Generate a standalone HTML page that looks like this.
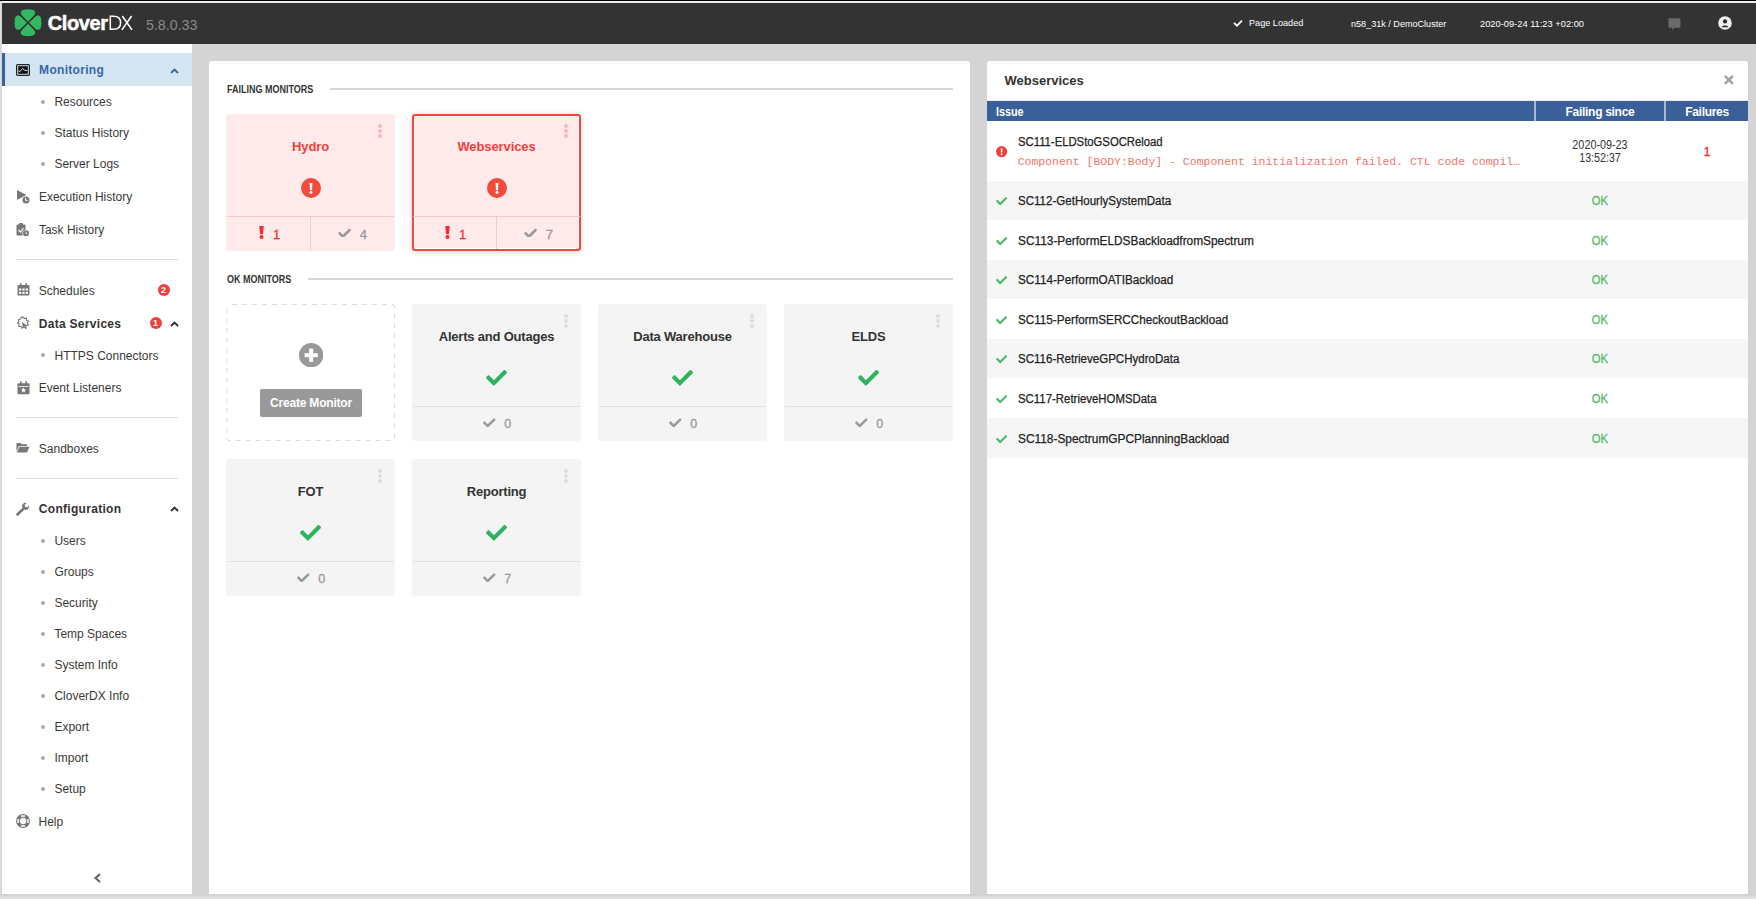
<!DOCTYPE html><html><head><meta charset="utf-8"><style>
html,body{margin:0;padding:0;}
body{width:1756px;height:899px;position:relative;overflow:hidden;background:#d4d4d4;font-family:"Liberation Sans", sans-serif;}
.r{position:absolute;}
.t{position:absolute;white-space:nowrap;line-height:1;}
</style></head><body>
<div class="r" style="left:0px;top:0px;width:1756px;height:1px;background:#050505;"></div>
<div class="r" style="left:0px;top:1px;width:1756px;height:2px;background:#ededed;"></div>
<div class="r" style="left:0px;top:0px;width:2px;height:899px;background:linear-gradient(90deg,#e4e4e4,#cfcfcf);top:1px;"></div>
<div class="r" style="left:2px;top:3px;width:1754px;height:41px;background:#333333;"></div>
<div class="r" style="left:2px;top:44px;width:190px;height:850px;background:#ffffff;"></div>
<div class="r" style="left:209px;top:61px;width:761px;height:833px;background:#ffffff;border-radius:3px 3px 0 0;"></div>
<div class="r" style="left:987px;top:61px;width:761px;height:833px;background:#ffffff;border-radius:3px 3px 0 0;"></div>
<div class="r" style="left:0px;top:894px;width:1756px;height:5px;background:linear-gradient(180deg,#cdcdcd,#e9e9e9);"></div>
<svg class="r" style="left:14px;top:9px;" width="28" height="28" viewBox="0 0 28 28"><g transform="translate(14,13.7)"><g transform="rotate(0)"><path d="M0 -0.5 L-5.6 -6.6 C-8 -9.2 -7.6 -12.4 -4.4 -13 Q0 -13.9 4.4 -13 C7.6 -12.4 8 -9.2 5.6 -6.6 Z" fill="#33b864"/></g><g transform="rotate(90)"><path d="M0 -0.5 L-5.6 -6.6 C-8 -9.2 -7.6 -12.4 -4.4 -13 Q0 -13.9 4.4 -13 C7.6 -12.4 8 -9.2 5.6 -6.6 Z" fill="#33b864"/></g><g transform="rotate(180)"><path d="M0 -0.5 L-5.6 -6.6 C-8 -9.2 -7.6 -12.4 -4.4 -13 Q0 -13.9 4.4 -13 C7.6 -12.4 8 -9.2 5.6 -6.6 Z" fill="#33b864"/></g><g transform="rotate(270)"><path d="M0 -0.5 L-5.6 -6.6 C-8 -9.2 -7.6 -12.4 -4.4 -13 Q0 -13.9 4.4 -13 C7.6 -12.4 8 -9.2 5.6 -6.6 Z" fill="#33b864"/></g><path d="M-15 -15 L15 15 M15 -15 L-15 15" stroke="#333" stroke-width="1.5"/></g></svg>
<div class="t" style="left:47.7px;top:12.97px;font-size:20px;font-weight:bold;color:#ffffff;letter-spacing:-0.4px;-webkit-text-stroke:0.5px #fff;">Clover</div>
<svg class="r" style="left:100px;top:10px;" width="40" height="24" viewBox="100 10 40 24"><path d="M110.3 16.2 V29.3 H113.6 C118.6 29.3 120.6 26.2 120.6 22.75 C120.6 19.3 118.6 16.2 113.6 16.2 Z" fill="none" stroke="#fff" stroke-width="1.5"/><path d="M122.3 16 L132 29.9 M131.6 16 L121.9 29.9" stroke="#fff" stroke-width="1.6"/></svg>
<div class="t" style="left:145.5px;top:17.20px;font-size:15px;font-weight:normal;color:#8a8a8a;transform:scaleX(0.948);transform-origin:left top;">5.8.0.33</div>
<svg class="r" style="left:1233px;top:19px;overflow:visible;" width="10" height="9" viewBox="0 0 512 512"><path fill="#fff" d="M173.9 439.4l-166.4-166.4c-10-10-10-26.2 0-36.2l36.2-36.2c10-10 26.2-10 36.2 0L192 312.7 432.1 72.6c10-10 26.2-10 36.2 0l36.2 36.2c10 10 10 26.2 0 36.2l-294.4 294.4c-10 10-26.2 10-36.2 0z"/></svg>
<div class="t" style="left:1249px;top:17.87px;font-size:9.6px;font-weight:normal;color:#ffffff;transform:scaleX(0.952);transform-origin:left top;">Page Loaded</div>
<div class="t" style="left:1350.7px;top:18.67px;font-size:9.6px;font-weight:normal;color:#ffffff;transform:scaleX(0.945);transform-origin:left top;">n58_31k / DemoCluster</div>
<div class="t" style="left:1479.6px;top:18.70px;font-size:9.8px;font-weight:normal;color:#ffffff;transform:scaleX(0.949);transform-origin:left top;">2020-09-24 11:23 +02:00</div>
<svg class="r" style="left:1668px;top:18px;" width="13" height="13" viewBox="0 0 13 13"><path fill="#6a6a6a" d="M1.4 0.2 H11.4 Q12.4 0.2 12.4 1.2 V8.8 Q12.4 9.8 11.4 9.8 H6.6 L4.2 12.2 V9.8 H1.4 Q0.4 9.8 0.4 8.8 V1.2 Q0.4 0.2 1.4 0.2 Z"/></svg>
<svg class="r" style="left:1717.8px;top:15.9px;" width="14" height="14" viewBox="0 0 14 14"><circle cx="7" cy="7" r="6.8" fill="#eeeeee"/><circle cx="7" cy="5.4" r="2.1" fill="#2a2a2a"/><path d="M3.7 11.2 C4 8.8 10 8.8 10.3 11.2 Z" fill="#2a2a2a"/></svg>
<div class="r" style="left:2px;top:53px;width:190px;height:33px;background:#d3e5f0;"></div>
<div class="r" style="left:2px;top:53px;width:3px;height:33px;background:#3a62a3;"></div>
<svg class="r" style="left:16px;top:64px;" width="14" height="12" viewBox="0 0 14 12"><rect x="0.6" y="0.6" width="12.8" height="10.8" fill="none" stroke="#222" stroke-width="1.2" rx="1"/><rect x="2.2" y="2.2" width="9.6" height="7.6" fill="#111"/><path d="M2.3 7 L4.2 7.5 L6.6 4.3 L8.2 6.2 L11.4 6.6" stroke="#c8d2da" stroke-width="1" fill="none"/></svg>
<div class="t" style="left:39.1px;top:63.84px;font-size:12px;font-weight:bold;color:#3a66a8;letter-spacing:0.3px;">Monitoring</div>
<svg class="r" style="left:169.7px;top:67.5px;" width="9" height="6" viewBox="0 0 9 6"><path d="M1 5 L4.5 1.5 L8 5" fill="none" stroke="#3a66a8" stroke-width="1.9"/></svg>
<div class="r" style="left:41px;top:99.5px;width:4px;height:4px;background:#aaaaaa;border-radius:50%;"></div>
<div class="t" style="left:54.4px;top:95.84px;font-size:12px;font-weight:normal;color:#3a3a3a;">Resources</div>
<div class="r" style="left:41px;top:130.5px;width:4px;height:4px;background:#aaaaaa;border-radius:50%;"></div>
<div class="t" style="left:54.4px;top:126.84px;font-size:12px;font-weight:normal;color:#3a3a3a;">Status History</div>
<div class="r" style="left:41px;top:161.5px;width:4px;height:4px;background:#aaaaaa;border-radius:50%;"></div>
<div class="t" style="left:54.4px;top:157.84px;font-size:12px;font-weight:normal;color:#3a3a3a;">Server Logs</div>
<div class="t" style="left:38.9px;top:191.04px;font-size:12px;font-weight:normal;color:#3a3a3a;">Execution History</div>
<div class="t" style="left:38.9px;top:224.34px;font-size:12px;font-weight:normal;color:#3a3a3a;">Task History</div>
<div class="r" style="left:16px;top:259px;width:162px;height:1px;background:#dddddd;"></div>
<div class="t" style="left:38.7px;top:284.54px;font-size:12px;font-weight:normal;color:#3a3a3a;">Schedules</div>
<div class="t" style="left:38.7px;top:317.84px;font-size:12px;font-weight:bold;color:#333;letter-spacing:0.3px;">Data Services</div>
<div class="t" style="left:54.5px;top:349.54px;font-size:12px;font-weight:normal;color:#3a3a3a;">HTTPS Connectors</div>
<div class="r" style="left:41px;top:353.2px;width:4px;height:4px;background:#aaaaaa;border-radius:50%;"></div>
<div class="t" style="left:38.7px;top:382.34px;font-size:12px;font-weight:normal;color:#3a3a3a;">Event Listeners</div>
<div class="r" style="left:16px;top:417px;width:162px;height:1px;background:#dddddd;"></div>
<div class="t" style="left:38.8px;top:442.84px;font-size:12px;font-weight:normal;color:#3a3a3a;">Sandboxes</div>
<div class="r" style="left:16px;top:478px;width:162px;height:1px;background:#dddddd;"></div>
<div class="t" style="left:38.8px;top:502.84px;font-size:12px;font-weight:bold;color:#333;letter-spacing:0.3px;">Configuration</div>
<svg class="r" style="left:169.5px;top:506px;" width="9" height="6" viewBox="0 0 9 6"><path d="M1 5 L4.5 1.5 L8 5" fill="none" stroke="#333" stroke-width="1.9"/></svg>
<svg class="r" style="left:169.5px;top:321px;" width="9" height="6" viewBox="0 0 9 6"><path d="M1 5 L4.5 1.5 L8 5" fill="none" stroke="#333" stroke-width="1.9"/></svg>
<div class="r" style="left:41px;top:538.5px;width:4px;height:4px;background:#aaaaaa;border-radius:50%;"></div>
<div class="t" style="left:54.4px;top:534.84px;font-size:12px;font-weight:normal;color:#3a3a3a;">Users</div>
<div class="r" style="left:41px;top:569.5px;width:4px;height:4px;background:#aaaaaa;border-radius:50%;"></div>
<div class="t" style="left:54.4px;top:565.84px;font-size:12px;font-weight:normal;color:#3a3a3a;">Groups</div>
<div class="r" style="left:41px;top:600.5px;width:4px;height:4px;background:#aaaaaa;border-radius:50%;"></div>
<div class="t" style="left:54.4px;top:596.84px;font-size:12px;font-weight:normal;color:#3a3a3a;">Security</div>
<div class="r" style="left:41px;top:631.5px;width:4px;height:4px;background:#aaaaaa;border-radius:50%;"></div>
<div class="t" style="left:54.4px;top:627.84px;font-size:12px;font-weight:normal;color:#3a3a3a;">Temp Spaces</div>
<div class="r" style="left:41px;top:662.5px;width:4px;height:4px;background:#aaaaaa;border-radius:50%;"></div>
<div class="t" style="left:54.4px;top:658.84px;font-size:12px;font-weight:normal;color:#3a3a3a;">System Info</div>
<div class="r" style="left:41px;top:693.5px;width:4px;height:4px;background:#aaaaaa;border-radius:50%;"></div>
<div class="t" style="left:54.4px;top:689.84px;font-size:12px;font-weight:normal;color:#3a3a3a;">CloverDX Info</div>
<div class="r" style="left:41px;top:724.5px;width:4px;height:4px;background:#aaaaaa;border-radius:50%;"></div>
<div class="t" style="left:54.4px;top:720.84px;font-size:12px;font-weight:normal;color:#3a3a3a;">Export</div>
<div class="r" style="left:41px;top:755.5px;width:4px;height:4px;background:#aaaaaa;border-radius:50%;"></div>
<div class="t" style="left:54.4px;top:751.84px;font-size:12px;font-weight:normal;color:#3a3a3a;">Import</div>
<div class="r" style="left:41px;top:786.5px;width:4px;height:4px;background:#aaaaaa;border-radius:50%;"></div>
<div class="t" style="left:54.4px;top:782.84px;font-size:12px;font-weight:normal;color:#3a3a3a;">Setup</div>
<div class="t" style="left:38.5px;top:815.54px;font-size:12px;font-weight:normal;color:#3a3a3a;">Help</div>
<div class="r" style="left:157.5px;top:284px;width:12px;height:12px;border-radius:50%;background:#f0403a;color:#fff;font-size:9px;font-weight:bold;line-height:12px;text-align:center;">2</div>
<div class="r" style="left:149.5px;top:317.3px;width:12px;height:12px;border-radius:50%;background:#f0403a;color:#fff;font-size:9px;font-weight:bold;line-height:12px;text-align:center;">1</div>
<svg class="r" style="left:93px;top:873px;" width="9" height="10" viewBox="0 0 9 10"><path d="M7 1 L2.5 5 L7 9" fill="none" stroke="#666" stroke-width="2.2"/></svg>
<svg class="r" style="left:16px;top:189px;" width="14" height="15" viewBox="0 0 14 15"><path d="M1 1 L10.5 6 L1 11 Z" fill="#777"/><circle cx="10" cy="11" r="4.2" fill="#fff"/><circle cx="10" cy="11" r="3.5" fill="#777"/><path d="M9.6 8.8 V11.4 H11.6" stroke="#fff" stroke-width="1" fill="none"/></svg>
<svg class="r" style="left:16px;top:222px;" width="14" height="15" viewBox="0 0 14 15"><rect x="0.5" y="2.5" width="9" height="11" rx="1" fill="#777"/><rect x="3" y="1" width="4" height="2.5" rx="0.8" fill="#777"/><path d="M2.5 8 L4.5 10 L7.5 6" stroke="#fff" stroke-width="1.2" fill="none"/><circle cx="10" cy="11.3" r="3.6" fill="#fff"/><circle cx="10" cy="11.3" r="3" fill="#777"/><path d="M10 9.6 V11.5 H11.2" stroke="#fff" stroke-width="0.8" fill="none"/></svg>
<svg class="r" style="left:16.5px;top:283px;" width="13" height="13" viewBox="0 0 13 13"><rect x="0.5" y="2" width="12" height="10.5" rx="1" fill="#777"/><rect x="3" y="0.3" width="1.6" height="3" fill="#777"/><rect x="8.4" y="0.3" width="1.6" height="3" fill="#777"/><g fill="#fff"><rect x="2" y="5.5" width="2.3" height="2"/><rect x="5.35" y="5.5" width="2.3" height="2"/><rect x="8.7" y="5.5" width="2.3" height="2"/><rect x="2" y="8.8" width="2.3" height="2"/><rect x="5.35" y="8.8" width="2.3" height="2"/><rect x="8.7" y="8.8" width="2.3" height="2"/></g></svg>
<svg class="r" style="left:16px;top:316px;" width="14" height="15" viewBox="0 0 14 15"><path d="M7 1 L8.3 2.6 L10.4 2.2 L10.6 4.3 L12.5 5.3 L11.4 7.1 L12.3 9 L10.2 9.6 L9.7 11.7 L7.7 11 L6 12.3 L4.9 10.5 L2.8 10.4 L3.1 8.3 L1.5 7 L3 5.5 L2.5 3.4 L4.6 3.1 L5.3 1.1 Z" fill="none" stroke="#777" stroke-width="1.1"/><path d="M6 6 L11 9.5 L9.2 10 L10.5 12.8 L9.3 13.3 L8.2 10.6 L6.8 11.8 Z" fill="#777"/></svg>
<svg class="r" style="left:16.5px;top:381px;" width="13" height="14" viewBox="0 0 13 14"><rect x="0.5" y="2.3" width="12" height="11" rx="1" fill="#777"/><rect x="3" y="0.3" width="1.6" height="3" fill="#777"/><rect x="8.4" y="0.3" width="1.6" height="3" fill="#777"/><rect x="1.6" y="5.2" width="9.8" height="0.8" fill="#fff"/><path d="M6.5 6.6 L7.3 8.3 L9.1 8.4 L7.7 9.6 L8.2 11.4 L6.5 10.4 L4.8 11.4 L5.3 9.6 L3.9 8.4 L5.7 8.3 Z" fill="#fff"/></svg>
<svg class="r" style="left:16px;top:442px;" width="14" height="11" viewBox="0 0 14 11"><path d="M0.5 1 H4.5 L5.8 2.3 H11 V4 H3 L0.5 9.5 Z" fill="#777"/><path d="M3.4 4.8 H13.5 L11 10.5 H0.8 Z" fill="#777"/></svg>
<svg class="r" style="left:16px;top:502px;" width="14" height="14" viewBox="0 0 14 14"><path d="M1.5 12.5 L7.2 6.8" stroke="#777" stroke-width="2.6" stroke-linecap="round"/><path d="M6.2 5.2 C5.5 2.6 7.8 0.3 10.6 0.9 L8.6 2.9 L9.2 4.8 L11.1 5.4 L13.1 3.4 C13.7 6.2 11.4 8.5 8.8 7.8 Z" fill="#777"/></svg>
<svg class="r" style="left:16px;top:814px;" width="14" height="14" viewBox="0 0 14 14"><circle cx="7" cy="7" r="5.1" fill="none" stroke="#777" stroke-width="3.7"/><g fill="#fff"><rect x="5" y="1.3" width="4" height="1.5"/><rect x="5" y="11.2" width="4" height="1.5"/><rect x="1.3" y="5" width="1.5" height="4"/><rect x="11.2" y="5" width="1.5" height="4"/></g></svg>
<div class="t" style="left:226.5px;top:84.73px;font-size:10px;font-weight:bold;color:#333;transform:scaleX(0.9);transform-origin:left top;">FAILING MONITORS</div>
<div class="r" style="left:330px;top:88px;width:623px;height:2px;background:#d6d6d6;"></div>
<div class="t" style="left:226.7px;top:275.13px;font-size:10px;font-weight:bold;color:#333;transform:scaleX(0.9);transform-origin:left top;">OK MONITORS</div>
<div class="r" style="left:308px;top:278px;width:645px;height:2px;background:#d6d6d6;"></div>
<div class="r" style="left:226px;top:114px;width:169px;height:137px;background:#feeaea;border-radius:3px;"></div>
<div class="r" style="left:378.3px;top:124.2px;width:4px;height:4px;background:#f7b9b6;border-radius:50%;"></div>
<div class="r" style="left:378.3px;top:129.0px;width:4px;height:4px;background:#f7b9b6;border-radius:50%;"></div>
<div class="r" style="left:378.3px;top:133.8px;width:4px;height:4px;background:#f7b9b6;border-radius:50%;"></div>
<div class="t" style="left:226px;top:140.10px;font-size:13px;font-weight:bold;color:#f0403a;letter-spacing:-0.1px;width:169px;text-align:center;">Hydro</div>
<svg class="r" style="left:300.5px;top:177.8px;" width="20" height="20" viewBox="0 0 20 20"><circle cx="10" cy="10" r="10" fill="#f44a3c"/><path d="M8.6 5 H11.4 L11 12.2 H9 Z" fill="#fff"/><circle cx="10" cy="14.4" r="1.45" fill="#fff"/></svg>
<div class="r" style="left:227px;top:216px;width:167px;height:1px;background:#f6c8c8;"></div>
<div class="r" style="left:310px;top:217px;width:1px;height:34px;background:#f6c8c8;"></div>
<svg class="r" style="left:259.2px;top:225.8px;" width="5" height="13" viewBox="0 0 5 13"><path d="M0.3 0 H4.7 L4 8.3 H1 Z" fill="#f0302c"/><circle cx="2.5" cy="11" r="2" fill="#f0302c"/></svg>
<div class="t" style="left:273px;top:227.70px;font-size:13px;font-weight:normal;color:#f0302c;-webkit-text-stroke:0.3px #f0302c;">1</div>
<svg class="r" style="left:338px;top:227.3px;" width="13" height="10" viewBox="0 0 512 400"><path fill="#999" d="M173.9 439.4l-166.4-166.4c-10-10-10-26.2 0-36.2l36.2-36.2c10-10 26.2-10 36.2 0L192 312.7 432.1 72.6c10-10 26.2-10 36.2 0l36.2 36.2c10 10 10 26.2 0 36.2l-294.4 294.4c-10 10-26.2 10-36.2 0z"/></svg>
<div class="t" style="left:359.8px;top:227.70px;font-size:13px;font-weight:normal;color:#999;-webkit-text-stroke:0.3px #999;">4</div>
<div class="r" style="left:412px;top:114px;width:169px;height:137px;background:#feeaea;border-radius:3px;box-sizing:border-box;border:2px solid #f6463a;box-shadow:inset 0 0 0 1px #fff, 0 1px 6px rgba(0,0,0,0.18);"></div>
<div class="r" style="left:564.3px;top:124.2px;width:4px;height:4px;background:#f7b9b6;border-radius:50%;"></div>
<div class="r" style="left:564.3px;top:129.0px;width:4px;height:4px;background:#f7b9b6;border-radius:50%;"></div>
<div class="r" style="left:564.3px;top:133.8px;width:4px;height:4px;background:#f7b9b6;border-radius:50%;"></div>
<div class="t" style="left:412px;top:140.10px;font-size:13px;font-weight:bold;color:#f0403a;letter-spacing:-0.1px;width:169px;text-align:center;">Webservices</div>
<svg class="r" style="left:486.5px;top:177.8px;" width="20" height="20" viewBox="0 0 20 20"><circle cx="10" cy="10" r="10" fill="#f44a3c"/><path d="M8.6 5 H11.4 L11 12.2 H9 Z" fill="#fff"/><circle cx="10" cy="14.4" r="1.45" fill="#fff"/></svg>
<div class="r" style="left:413px;top:216px;width:167px;height:1px;background:#f6c8c8;"></div>
<div class="r" style="left:496px;top:217px;width:1px;height:32px;background:#f6c8c8;"></div>
<svg class="r" style="left:445.2px;top:225.8px;" width="5" height="13" viewBox="0 0 5 13"><path d="M0.3 0 H4.7 L4 8.3 H1 Z" fill="#f0302c"/><circle cx="2.5" cy="11" r="2" fill="#f0302c"/></svg>
<div class="t" style="left:459px;top:227.70px;font-size:13px;font-weight:normal;color:#f0302c;-webkit-text-stroke:0.3px #f0302c;">1</div>
<svg class="r" style="left:524px;top:227.3px;" width="13" height="10" viewBox="0 0 512 400"><path fill="#999" d="M173.9 439.4l-166.4-166.4c-10-10-10-26.2 0-36.2l36.2-36.2c10-10 26.2-10 36.2 0L192 312.7 432.1 72.6c10-10 26.2-10 36.2 0l36.2 36.2c10 10 10 26.2 0 36.2l-294.4 294.4c-10 10-26.2 10-36.2 0z"/></svg>
<div class="t" style="left:545.8px;top:227.70px;font-size:13px;font-weight:normal;color:#999;-webkit-text-stroke:0.3px #999;">7</div>
<svg class="r" style="left:226px;top:304px;" width="169" height="137" viewBox="0 0 169 137"><rect x="1" y="0.5" width="167.5" height="136" rx="2" fill="none" stroke="#dcdcdc" stroke-width="1" stroke-dasharray="5 5" stroke-dashoffset="-3"/></svg>
<svg class="r" style="left:298.5px;top:342.7px;" width="24.4" height="24.4" viewBox="0 0 24 24"><circle cx="12" cy="12" r="12" fill="#999"/><rect x="5.5" y="10" width="13" height="4" fill="#fff"/><rect x="10" y="5.5" width="4" height="13" fill="#fff"/></svg>
<div class="r" style="left:260px;top:389px;width:102px;height:28px;background:#999;border-radius:2px;color:#fff;font-size:12px;font-weight:bold;line-height:28px;text-align:center;letter-spacing:-0.2px;">Create Monitor</div>
<div class="r" style="left:412px;top:304px;width:169px;height:137px;background:#f4f4f4;border-radius:3px;"></div>
<div class="r" style="left:564.4px;top:314.0px;width:4px;height:4px;background:#dcdcdc;border-radius:50%;"></div>
<div class="r" style="left:564.4px;top:318.8px;width:4px;height:4px;background:#dcdcdc;border-radius:50%;"></div>
<div class="r" style="left:564.4px;top:323.6px;width:4px;height:4px;background:#dcdcdc;border-radius:50%;"></div>
<div class="t" style="left:412px;top:330.30px;font-size:13px;font-weight:bold;color:#333;letter-spacing:-0.2px;width:169px;text-align:center;">Alerts and Outages</div>
<svg class="r" style="left:486px;top:370.2px;" width="21" height="15.6" viewBox="0 0 512 380"><path fill="#2fb35e" d="M173.9 439.4l-166.4-166.4c-10-10-10-26.2 0-36.2l36.2-36.2c10-10 26.2-10 36.2 0L192 312.7 432.1 72.6c10-10 26.2-10 36.2 0l36.2 36.2c10 10 10 26.2 0 36.2l-294.4 294.4c-10 10-26.2 10-36.2 0z" transform="translate(0,-65)"/></svg>
<div class="r" style="left:413px;top:406px;width:167px;height:1px;background:#e2e2e2;"></div>
<svg class="r" style="left:483px;top:417.7px;" width="12.5" height="9.7" viewBox="0 0 512 380"><path fill="#999" d="M173.9 439.4l-166.4-166.4c-10-10-10-26.2 0-36.2l36.2-36.2c10-10 26.2-10 36.2 0L192 312.7 432.1 72.6c10-10 26.2-10 36.2 0l36.2 36.2c10 10 10 26.2 0 36.2l-294.4 294.4c-10 10-26.2 10-36.2 0z" transform="translate(0,-65)"/></svg>
<div class="t" style="left:504.3px;top:417.92px;font-size:12.5px;font-weight:normal;color:#999;-webkit-text-stroke:0.3px #999;">0</div>
<div class="r" style="left:598px;top:304px;width:169px;height:137px;background:#f4f4f4;border-radius:3px;"></div>
<div class="r" style="left:750.4px;top:314.0px;width:4px;height:4px;background:#dcdcdc;border-radius:50%;"></div>
<div class="r" style="left:750.4px;top:318.8px;width:4px;height:4px;background:#dcdcdc;border-radius:50%;"></div>
<div class="r" style="left:750.4px;top:323.6px;width:4px;height:4px;background:#dcdcdc;border-radius:50%;"></div>
<div class="t" style="left:598px;top:330.30px;font-size:13px;font-weight:bold;color:#333;letter-spacing:-0.2px;width:169px;text-align:center;">Data Warehouse</div>
<svg class="r" style="left:672px;top:370.2px;" width="21" height="15.6" viewBox="0 0 512 380"><path fill="#2fb35e" d="M173.9 439.4l-166.4-166.4c-10-10-10-26.2 0-36.2l36.2-36.2c10-10 26.2-10 36.2 0L192 312.7 432.1 72.6c10-10 26.2-10 36.2 0l36.2 36.2c10 10 10 26.2 0 36.2l-294.4 294.4c-10 10-26.2 10-36.2 0z" transform="translate(0,-65)"/></svg>
<div class="r" style="left:599px;top:406px;width:167px;height:1px;background:#e2e2e2;"></div>
<svg class="r" style="left:669px;top:417.7px;" width="12.5" height="9.7" viewBox="0 0 512 380"><path fill="#999" d="M173.9 439.4l-166.4-166.4c-10-10-10-26.2 0-36.2l36.2-36.2c10-10 26.2-10 36.2 0L192 312.7 432.1 72.6c10-10 26.2-10 36.2 0l36.2 36.2c10 10 10 26.2 0 36.2l-294.4 294.4c-10 10-26.2 10-36.2 0z" transform="translate(0,-65)"/></svg>
<div class="t" style="left:690.3px;top:417.92px;font-size:12.5px;font-weight:normal;color:#999;-webkit-text-stroke:0.3px #999;">0</div>
<div class="r" style="left:784px;top:304px;width:169px;height:137px;background:#f4f4f4;border-radius:3px;"></div>
<div class="r" style="left:936.4px;top:314.0px;width:4px;height:4px;background:#dcdcdc;border-radius:50%;"></div>
<div class="r" style="left:936.4px;top:318.8px;width:4px;height:4px;background:#dcdcdc;border-radius:50%;"></div>
<div class="r" style="left:936.4px;top:323.6px;width:4px;height:4px;background:#dcdcdc;border-radius:50%;"></div>
<div class="t" style="left:784px;top:330.30px;font-size:13px;font-weight:bold;color:#333;letter-spacing:-0.2px;width:169px;text-align:center;">ELDS</div>
<svg class="r" style="left:858px;top:370.2px;" width="21" height="15.6" viewBox="0 0 512 380"><path fill="#2fb35e" d="M173.9 439.4l-166.4-166.4c-10-10-10-26.2 0-36.2l36.2-36.2c10-10 26.2-10 36.2 0L192 312.7 432.1 72.6c10-10 26.2-10 36.2 0l36.2 36.2c10 10 10 26.2 0 36.2l-294.4 294.4c-10 10-26.2 10-36.2 0z" transform="translate(0,-65)"/></svg>
<div class="r" style="left:785px;top:406px;width:167px;height:1px;background:#e2e2e2;"></div>
<svg class="r" style="left:855px;top:417.7px;" width="12.5" height="9.7" viewBox="0 0 512 380"><path fill="#999" d="M173.9 439.4l-166.4-166.4c-10-10-10-26.2 0-36.2l36.2-36.2c10-10 26.2-10 36.2 0L192 312.7 432.1 72.6c10-10 26.2-10 36.2 0l36.2 36.2c10 10 10 26.2 0 36.2l-294.4 294.4c-10 10-26.2 10-36.2 0z" transform="translate(0,-65)"/></svg>
<div class="t" style="left:876.3px;top:417.92px;font-size:12.5px;font-weight:normal;color:#999;-webkit-text-stroke:0.3px #999;">0</div>
<div class="r" style="left:226px;top:459px;width:169px;height:137px;background:#f4f4f4;border-radius:3px;"></div>
<div class="r" style="left:378.4px;top:469.0px;width:4px;height:4px;background:#dcdcdc;border-radius:50%;"></div>
<div class="r" style="left:378.4px;top:473.8px;width:4px;height:4px;background:#dcdcdc;border-radius:50%;"></div>
<div class="r" style="left:378.4px;top:478.6px;width:4px;height:4px;background:#dcdcdc;border-radius:50%;"></div>
<div class="t" style="left:226px;top:485.30px;font-size:13px;font-weight:bold;color:#333;letter-spacing:-0.2px;width:169px;text-align:center;">FOT</div>
<svg class="r" style="left:300px;top:525.2px;" width="21" height="15.6" viewBox="0 0 512 380"><path fill="#2fb35e" d="M173.9 439.4l-166.4-166.4c-10-10-10-26.2 0-36.2l36.2-36.2c10-10 26.2-10 36.2 0L192 312.7 432.1 72.6c10-10 26.2-10 36.2 0l36.2 36.2c10 10 10 26.2 0 36.2l-294.4 294.4c-10 10-26.2 10-36.2 0z" transform="translate(0,-65)"/></svg>
<div class="r" style="left:227px;top:561px;width:167px;height:1px;background:#e2e2e2;"></div>
<svg class="r" style="left:297px;top:572.7px;" width="12.5" height="9.7" viewBox="0 0 512 380"><path fill="#999" d="M173.9 439.4l-166.4-166.4c-10-10-10-26.2 0-36.2l36.2-36.2c10-10 26.2-10 36.2 0L192 312.7 432.1 72.6c10-10 26.2-10 36.2 0l36.2 36.2c10 10 10 26.2 0 36.2l-294.4 294.4c-10 10-26.2 10-36.2 0z" transform="translate(0,-65)"/></svg>
<div class="t" style="left:318.3px;top:572.92px;font-size:12.5px;font-weight:normal;color:#999;-webkit-text-stroke:0.3px #999;">0</div>
<div class="r" style="left:412px;top:459px;width:169px;height:137px;background:#f4f4f4;border-radius:3px;"></div>
<div class="r" style="left:564.4px;top:469.0px;width:4px;height:4px;background:#dcdcdc;border-radius:50%;"></div>
<div class="r" style="left:564.4px;top:473.8px;width:4px;height:4px;background:#dcdcdc;border-radius:50%;"></div>
<div class="r" style="left:564.4px;top:478.6px;width:4px;height:4px;background:#dcdcdc;border-radius:50%;"></div>
<div class="t" style="left:412px;top:485.30px;font-size:13px;font-weight:bold;color:#333;letter-spacing:-0.2px;width:169px;text-align:center;">Reporting</div>
<svg class="r" style="left:486px;top:525.2px;" width="21" height="15.6" viewBox="0 0 512 380"><path fill="#2fb35e" d="M173.9 439.4l-166.4-166.4c-10-10-10-26.2 0-36.2l36.2-36.2c10-10 26.2-10 36.2 0L192 312.7 432.1 72.6c10-10 26.2-10 36.2 0l36.2 36.2c10 10 10 26.2 0 36.2l-294.4 294.4c-10 10-26.2 10-36.2 0z" transform="translate(0,-65)"/></svg>
<div class="r" style="left:413px;top:561px;width:167px;height:1px;background:#e2e2e2;"></div>
<svg class="r" style="left:483px;top:572.7px;" width="12.5" height="9.7" viewBox="0 0 512 380"><path fill="#999" d="M173.9 439.4l-166.4-166.4c-10-10-10-26.2 0-36.2l36.2-36.2c10-10 26.2-10 36.2 0L192 312.7 432.1 72.6c10-10 26.2-10 36.2 0l36.2 36.2c10 10 10 26.2 0 36.2l-294.4 294.4c-10 10-26.2 10-36.2 0z" transform="translate(0,-65)"/></svg>
<div class="t" style="left:504.3px;top:572.92px;font-size:12.5px;font-weight:normal;color:#999;-webkit-text-stroke:0.3px #999;">7</div>
<div class="t" style="left:1004.5px;top:74.00px;font-size:13px;font-weight:bold;color:#333;">Webservices</div>
<svg class="r" style="left:1724.4px;top:75px;" width="10" height="10" viewBox="0 0 10 10"><path d="M1.6 1.6 L8.2 8.2 M8.2 1.6 L1.6 8.2" stroke="#a3a3a3" stroke-width="2.5" stroke-linecap="round"/></svg>
<div class="r" style="left:987px;top:101px;width:761px;height:20px;background:#3b5f99;"></div>
<div class="r" style="left:1534px;top:101px;width:2px;height:20px;background:#aab9d2;"></div>
<div class="r" style="left:1663.5px;top:101px;width:2px;height:20px;background:#aab9d2;"></div>
<div class="r" style="left:987px;top:100px;width:761px;height:1px;background:#ececec;"></div>
<div class="t" style="left:996px;top:105.84px;font-size:12px;font-weight:bold;color:#fff;transform:scaleX(0.9);transform-origin:left top;">Issue</div>
<div class="t" style="left:1536px;top:105.84px;font-size:12px;font-weight:bold;color:#fff;letter-spacing:-0.3px;width:128px;text-align:center;">Failing since</div>
<div class="t" style="left:1665.5px;top:105.84px;font-size:12px;font-weight:bold;color:#fff;letter-spacing:-0.3px;width:83px;text-align:center;">Failures</div>
<svg class="r" style="left:995.8px;top:145.6px;" width="11.2" height="11.2" viewBox="0 0 20 20"><circle cx="10" cy="10" r="10" fill="#f0403a"/><path d="M8.4 4.2 H11.6 L11.1 11.8 H8.9 Z" fill="#fff"/><circle cx="10" cy="14.8" r="1.7" fill="#fff"/></svg>
<div class="t" style="left:1018.4px;top:135.84px;font-size:12px;font-weight:normal;color:#222;transform:scaleX(0.94140625);transform-origin:left top;-webkit-text-stroke:0.25px #222;">SC111-ELDStoGSOCReload</div>
<div class="t" style="left:1017.7px;top:155.79px;font-size:11.47px;font-weight:normal;color:#f4746c;font-family:'Liberation Mono', monospace;">Component [BODY:Body] - Component initialization failed. CTL code compil&#8230;</div>
<div class="t" style="left:1536px;top:138.54px;font-size:12px;font-weight:normal;color:#333;width:128px;text-align:center;transform:scaleX(0.9);transform-origin:center top;">2020-09-23</div>
<div class="t" style="left:1536px;top:151.84px;font-size:12px;font-weight:normal;color:#333;width:128px;text-align:center;transform:scaleX(0.89);transform-origin:center top;">13:52:37</div>
<div class="t" style="left:1665.5px;top:145.84px;font-size:12px;font-weight:normal;color:#f0302c;width:83px;text-align:center;-webkit-text-stroke:0.35px #f0302c;">1</div>
<div class="r" style="left:987px;top:180.8px;width:761px;height:39.3px;background:#f6f6f6;"></div>
<svg class="r" style="left:995.8px;top:197.10000000000002px;" width="11.2" height="8.4" viewBox="0 0 512 380"><path fill="#4cbb6c" d="M173.9 439.4l-166.4-166.4c-10-10-10-26.2 0-36.2l36.2-36.2c10-10 26.2-10 36.2 0L192 312.7 432.1 72.6c10-10 26.2-10 36.2 0l36.2 36.2c10 10 10 26.2 0 36.2l-294.4 294.4c-10 10-26.2 10-36.2 0z" transform="translate(0,-65)"/></svg>
<div class="t" style="left:1018.4px;top:195.14px;font-size:12px;font-weight:normal;color:#222;transform:scaleX(0.9623115577889447);transform-origin:left top;-webkit-text-stroke:0.25px #222;">SC112-GetHourlySystemData</div>
<div class="t" style="left:1536px;top:195.14px;font-size:12px;font-weight:normal;color:#5cb870;width:128px;text-align:center;transform:scaleX(0.94);transform-origin:center top;-webkit-text-stroke:0.3px #5cb870;">OK</div>
<svg class="r" style="left:995.8px;top:236.68px;" width="11.2" height="8.4" viewBox="0 0 512 380"><path fill="#4cbb6c" d="M173.9 439.4l-166.4-166.4c-10-10-10-26.2 0-36.2l36.2-36.2c10-10 26.2-10 36.2 0L192 312.7 432.1 72.6c10-10 26.2-10 36.2 0l36.2 36.2c10 10 10 26.2 0 36.2l-294.4 294.4c-10 10-26.2 10-36.2 0z" transform="translate(0,-65)"/></svg>
<div class="t" style="left:1018.4px;top:234.72px;font-size:12px;font-weight:normal;color:#222;transform:scaleX(0.9886792452830189);transform-origin:left top;-webkit-text-stroke:0.25px #222;">SC113-PerformELDSBackloadfromSpectrum</div>
<div class="t" style="left:1536px;top:234.72px;font-size:12px;font-weight:normal;color:#5cb870;width:128px;text-align:center;transform:scaleX(0.94);transform-origin:center top;-webkit-text-stroke:0.3px #5cb870;">OK</div>
<div class="r" style="left:987px;top:259.96000000000004px;width:761px;height:39.3px;background:#f6f6f6;"></div>
<svg class="r" style="left:995.8px;top:276.26000000000005px;" width="11.2" height="8.4" viewBox="0 0 512 380"><path fill="#4cbb6c" d="M173.9 439.4l-166.4-166.4c-10-10-10-26.2 0-36.2l36.2-36.2c10-10 26.2-10 36.2 0L192 312.7 432.1 72.6c10-10 26.2-10 36.2 0l36.2 36.2c10 10 10 26.2 0 36.2l-294.4 294.4c-10 10-26.2 10-36.2 0z" transform="translate(0,-65)"/></svg>
<div class="t" style="left:1018.4px;top:274.30px;font-size:12px;font-weight:normal;color:#222;transform:scaleX(0.9767295597484278);transform-origin:left top;-webkit-text-stroke:0.25px #222;">SC114-PerformOATIBackload</div>
<div class="t" style="left:1536px;top:274.30px;font-size:12px;font-weight:normal;color:#5cb870;width:128px;text-align:center;transform:scaleX(0.94);transform-origin:center top;-webkit-text-stroke:0.3px #5cb870;">OK</div>
<svg class="r" style="left:995.8px;top:315.84000000000003px;" width="11.2" height="8.4" viewBox="0 0 512 380"><path fill="#4cbb6c" d="M173.9 439.4l-166.4-166.4c-10-10-10-26.2 0-36.2l36.2-36.2c10-10 26.2-10 36.2 0L192 312.7 432.1 72.6c10-10 26.2-10 36.2 0l36.2 36.2c10 10 10 26.2 0 36.2l-294.4 294.4c-10 10-26.2 10-36.2 0z" transform="translate(0,-65)"/></svg>
<div class="t" style="left:1018.4px;top:313.88px;font-size:12px;font-weight:normal;color:#222;transform:scaleX(0.9735988883742472);transform-origin:left top;-webkit-text-stroke:0.25px #222;">SC115-PerformSERCCheckoutBackload</div>
<div class="t" style="left:1536px;top:313.88px;font-size:12px;font-weight:normal;color:#5cb870;width:128px;text-align:center;transform:scaleX(0.94);transform-origin:center top;-webkit-text-stroke:0.3px #5cb870;">OK</div>
<div class="r" style="left:987px;top:339.12px;width:761px;height:39.3px;background:#f6f6f6;"></div>
<svg class="r" style="left:995.8px;top:355.42px;" width="11.2" height="8.4" viewBox="0 0 512 380"><path fill="#4cbb6c" d="M173.9 439.4l-166.4-166.4c-10-10-10-26.2 0-36.2l36.2-36.2c10-10 26.2-10 36.2 0L192 312.7 432.1 72.6c10-10 26.2-10 36.2 0l36.2 36.2c10 10 10 26.2 0 36.2l-294.4 294.4c-10 10-26.2 10-36.2 0z" transform="translate(0,-65)"/></svg>
<div class="t" style="left:1018.4px;top:353.46px;font-size:12px;font-weight:normal;color:#222;transform:scaleX(0.9612634088200238);transform-origin:left top;-webkit-text-stroke:0.25px #222;">SC116-RetrieveGPCHydroData</div>
<div class="t" style="left:1536px;top:353.46px;font-size:12px;font-weight:normal;color:#5cb870;width:128px;text-align:center;transform:scaleX(0.94);transform-origin:center top;-webkit-text-stroke:0.3px #5cb870;">OK</div>
<svg class="r" style="left:995.8px;top:395.0px;" width="11.2" height="8.4" viewBox="0 0 512 380"><path fill="#4cbb6c" d="M173.9 439.4l-166.4-166.4c-10-10-10-26.2 0-36.2l36.2-36.2c10-10 26.2-10 36.2 0L192 312.7 432.1 72.6c10-10 26.2-10 36.2 0l36.2 36.2c10 10 10 26.2 0 36.2l-294.4 294.4c-10 10-26.2 10-36.2 0z" transform="translate(0,-65)"/></svg>
<div class="t" style="left:1018.4px;top:393.04px;font-size:12px;font-weight:normal;color:#222;transform:scaleX(0.9506172839506172);transform-origin:left top;-webkit-text-stroke:0.25px #222;">SC117-RetrieveHOMSData</div>
<div class="t" style="left:1536px;top:393.04px;font-size:12px;font-weight:normal;color:#5cb870;width:128px;text-align:center;transform:scaleX(0.94);transform-origin:center top;-webkit-text-stroke:0.3px #5cb870;">OK</div>
<div class="r" style="left:987px;top:418.28px;width:761px;height:39.3px;background:#f6f6f6;"></div>
<svg class="r" style="left:995.8px;top:434.58px;" width="11.2" height="8.4" viewBox="0 0 512 380"><path fill="#4cbb6c" d="M173.9 439.4l-166.4-166.4c-10-10-10-26.2 0-36.2l36.2-36.2c10-10 26.2-10 36.2 0L192 312.7 432.1 72.6c10-10 26.2-10 36.2 0l36.2 36.2c10 10 10 26.2 0 36.2l-294.4 294.4c-10 10-26.2 10-36.2 0z" transform="translate(0,-65)"/></svg>
<div class="t" style="left:1018.4px;top:432.62px;font-size:12px;font-weight:normal;color:#222;transform:scaleX(0.9906191369606003);transform-origin:left top;-webkit-text-stroke:0.25px #222;">SC118-SpectrumGPCPlanningBackload</div>
<div class="t" style="left:1536px;top:432.62px;font-size:12px;font-weight:normal;color:#5cb870;width:128px;text-align:center;transform:scaleX(0.94);transform-origin:center top;-webkit-text-stroke:0.3px #5cb870;">OK</div>
</body></html>
